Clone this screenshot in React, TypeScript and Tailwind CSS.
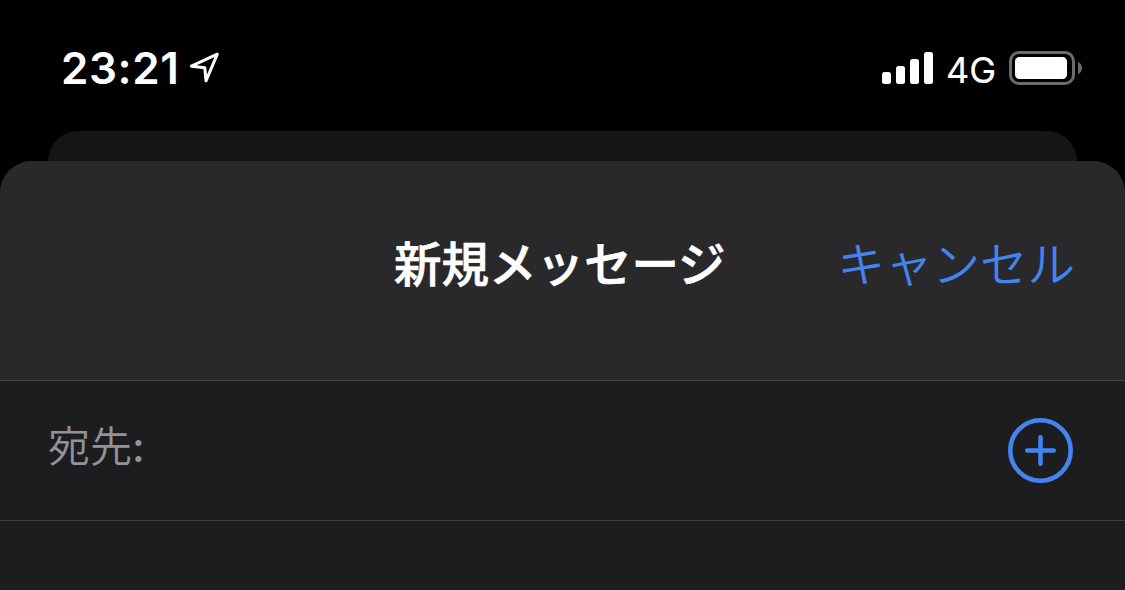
function LocationArrow() {
  return (
    <svg className="ml-[9px] mt-[51px] h-[34px] w-[32px]" viewBox="0 0 32 34" fill="none" stroke="white" strokeWidth="3" strokeLinejoin="round">
      <path d="M28.3 3.2 L2.4 15.2 L15.8 16.8 L17 29.8 Z" />
    </svg>
  );
}

function Signal() {
  return (
    <div className="mt-[52px] flex h-8 items-end gap-[5px]">
      <div className="h-3 w-[9px] rounded-[2.5px] bg-white" />
      <div className="h-[18px] w-[9px] rounded-[2.5px] bg-white" />
      <div className="h-[25px] w-[9px] rounded-[2.5px] bg-white" />
      <div className="h-8 w-[9px] rounded-[2.5px] bg-white" />
    </div>
  );
}

function Battery() {
  return (
    <svg className="ml-[13px] mt-[51px] h-[34px] w-[74px]" viewBox="0 0 74 34">
      <rect x="1.5" y="1.5" width="63" height="31" rx="8.5" fill="none" stroke="#6b6b6b" strokeWidth="3" />
      <rect x="6" y="6" width="52" height="22" rx="4.5" fill="white" />
      <path d="M69 11 C74.3 12.5 74.3 21.5 69 23 Z" fill="#6b6b6b" />
    </svg>
  );
}

function StatusBar() {
  return (
    <div className="flex h-[131px] items-start justify-between pl-[61px] pr-[42px] font-['Inter',sans-serif] text-white">
      <div className="flex">
        <span className="mt-[46px] w-[119px] text-[44px] font-semibold leading-[44px] tracking-[0.6px]">23:21</span>
        <LocationArrow />
      </div>
      <div className="flex">
        <Signal />
        <span className="ml-[13px] mt-[52px] w-[50px] whitespace-nowrap text-[36px] font-normal leading-[36px] [-webkit-text-stroke:0.2px_white]">4G</span>
        <Battery />
      </div>
    </div>
  );
}

export default function App() {
  return (
    <div className="h-[590px] w-[1125px] overflow-hidden bg-black font-['Noto_Sans_CJK_JP',sans-serif]">
      <StatusBar />
      {/* Edge of the sheet behind */}
      <div className="mx-12 h-[30px] rounded-t-[30px] bg-[#151517]" />
      <div className="h-[429px] overflow-hidden rounded-t-[32px] bg-[#1d1d1f]">
        <div className="flex h-[220px] items-start justify-between border-b border-[#414144] bg-[#29292b] pl-[394px] pr-[50px] pt-[77px]">
          <h1 className="whitespace-nowrap text-[47.5px] font-medium leading-[48px] text-white [-webkit-text-stroke:0.7px_white]">新規メッセージ</h1>
          <button className="whitespace-nowrap text-[47.5px] font-[350] leading-[48px] text-[#4384f0]">キャンセル</button>
        </div>
        <div className="flex h-[140px] justify-between border-b border-[#414144] pl-12 pr-[52px]">
          <label className="mt-[42px] flex text-[42px] font-[350] leading-[42px] text-[#929298]">
            宛先<span className="mt-[3px] font-['Inter',sans-serif] font-medium">:</span>
          </label>
          <svg className="mt-[37px] h-[65px] w-[65px]" viewBox="0 0 65 65" fill="none" stroke="#4384f0" strokeWidth="4.6" strokeLinecap="round">
            <circle cx="32.5" cy="32.5" r="30.2" />
            <path d="M32.5 19.3 V45.7 M19.3 32.5 H45.7" />
          </svg>
        </div>
      </div>
    </div>
  );
}
